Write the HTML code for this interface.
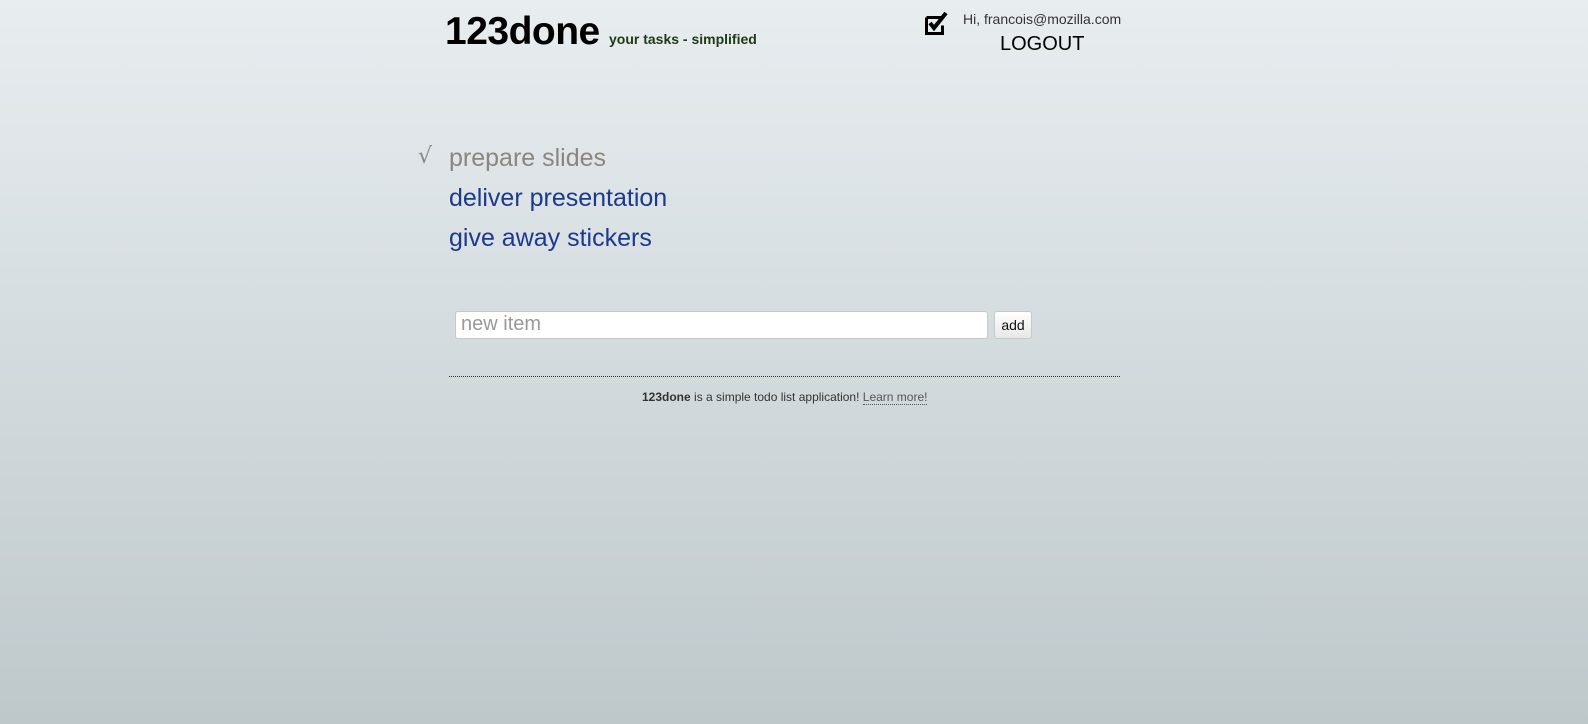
<!DOCTYPE html>
<html><head><style>
html,body{margin:0;height:724px;overflow:hidden}
body{background:linear-gradient(#e8edf0,#bec8cb);font-family:"Liberation Sans",sans-serif;position:relative;width:1588px}
.a{position:absolute;white-space:nowrap}
</style></head><body>
<div class="a" style="left:445px;top:10px;font-size:39px;font-weight:bold;color:#000;line-height:44px;letter-spacing:-0.5px">123done</div>
<div class="a" style="left:609px;top:31px;font-size:14px;font-weight:bold;color:#1c3a14;line-height:17px">your tasks - simplified</div>
<svg class="a" style="left:924px;top:11px" width="26" height="26" viewBox="0 0 26 26">
<path d="M2.5 6.5h15M2.5 6.5v16h16v-8" fill="none" stroke="#000" stroke-width="3"/>
<path d="M6 12l4 5 12-15" fill="none" stroke="#000" stroke-width="4"/>
</svg>
<div class="a" style="left:963px;top:11px;font-size:14px;color:#333;line-height:17px">Hi, francois@mozilla.com</div>
<div class="a" style="left:1000px;top:33px;font-size:20px;color:#000;line-height:23px">LOGOUT</div>
<div class="a" style="left:418px;top:144px;font-size:22px;color:#888;font-family:'DejaVu Sans',sans-serif">√</div>
<div class="a" style="left:449px;top:144px;font-size:25px;color:#8a8680;line-height:28px">prepare slides</div>
<div class="a" style="left:449px;top:184px;font-size:25px;color:#1c3a8a;line-height:28px">deliver presentation</div>
<div class="a" style="left:449px;top:224px;font-size:25px;color:#1c3a8a;line-height:28px">give away stickers</div>
<div class="a" style="left:455px;top:311px;width:531px;height:26px;background:#fff;border:1px solid #c8c8c8;border-radius:3px"></div>
<div class="a" style="left:461px;top:313px;font-size:20px;color:#999;line-height:23px">new item</div>
<div class="a" style="left:994px;top:311px;width:36px;height:26px;background:linear-gradient(#fff,#e8e8e8);border:1px solid #c8c8c8;border-radius:3px;font-size:14px;text-align:center;line-height:26px;color:#111">add</div>
<div class="a" style="left:449px;top:376px;width:671px;border-top:1px dotted #333"></div>
<div class="a" style="left:642px;top:390px;font-size:12px;color:#333;line-height:14px"><b>123done</b> is a simple todo list application! <span style="color:#555;border-bottom:1px dotted #555">Learn more!</span></div>
</body></html>
